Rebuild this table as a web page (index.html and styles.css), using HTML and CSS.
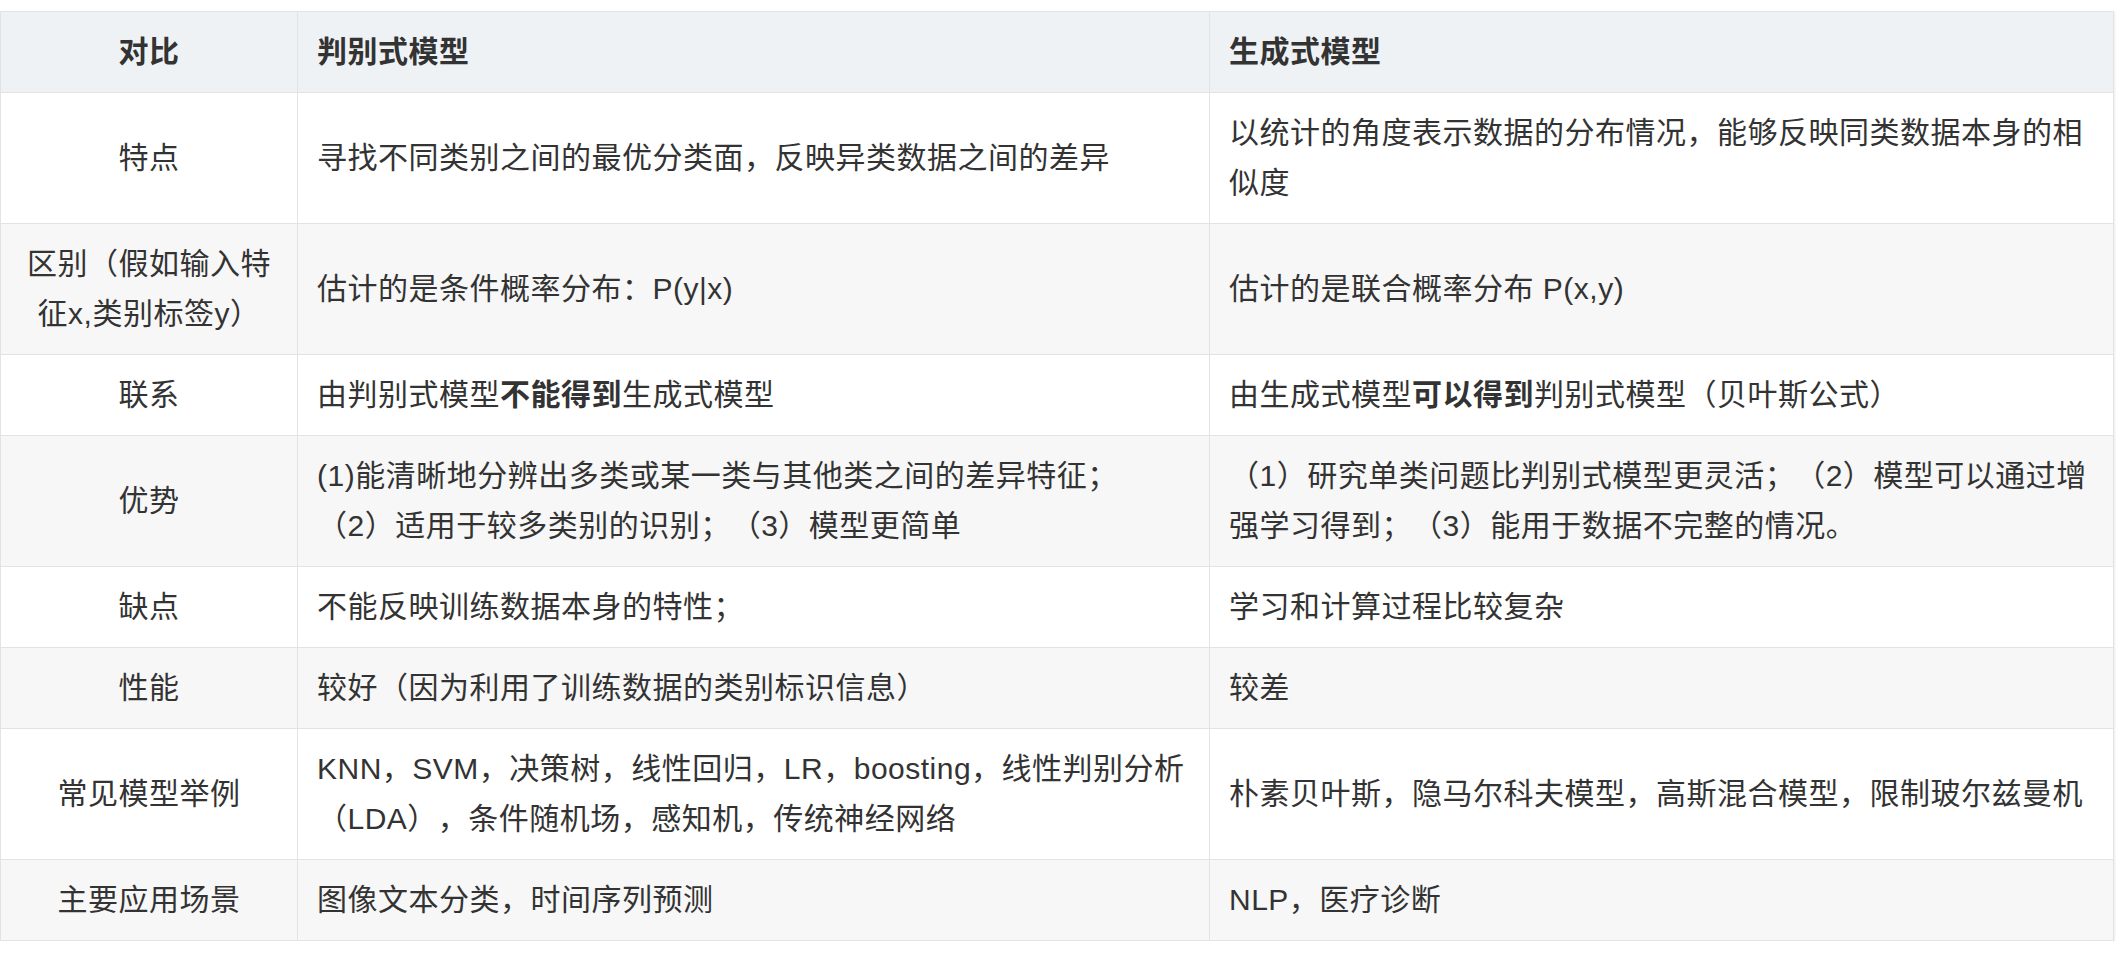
FILE: index.html
```html
<!DOCTYPE html>
<html lang="zh-CN">
<head>
<meta charset="utf-8">
<title>判别式模型与生成式模型对比</title>
<link rel="stylesheet" href="styles.css">
</head>
<body>
<table class="cmp">
  <colgroup>
    <col class="c1">
    <col class="c2">
    <col class="c3">
  </colgroup>
  <thead>
    <tr>
      <th class="center">对比</th>
      <th>判别式模型</th>
      <th>生成式模型</th>
    </tr>
  </thead>
  <tbody>
    <tr>
      <td class="center">特点</td>
      <td>寻找不同类别之间的最优分类面，反映异类数据之间的差异</td>
      <td>以统计的角度表示数据的分布情况，能够反映同类数据本身的相似度</td>
    </tr>
    <tr>
      <td class="center">区别（假如输入特征x,类别标签y）</td>
      <td>估计的是条件概率分布：P(y|x)</td>
      <td>估计的是联合概率分布 P(x,y)</td>
    </tr>
    <tr>
      <td class="center">联系</td>
      <td>由判别式模型<strong>不能得到</strong>生成式模型</td>
      <td>由生成式模型<strong>可以得到</strong>判别式模型（贝叶斯公式）</td>
    </tr>
    <tr>
      <td class="center">优势</td>
      <td>(1)能清晰地分辨出多类或某一类与其他类之间的差异特征；<br>（2）适用于较多类别的识别；（3）模型更简单</td>
      <td>（1）研究单类问题比判别式模型更灵活；（2）模型可以通过增强学习得到；（3）能用于数据不完整的情况。</td>
    </tr>
    <tr>
      <td class="center">缺点</td>
      <td>不能反映训练数据本身的特性；</td>
      <td>学习和计算过程比较复杂</td>
    </tr>
    <tr>
      <td class="center">性能</td>
      <td>较好（因为利用了训练数据的类别标识信息）</td>
      <td>较差</td>
    </tr>
    <tr>
      <td class="center">常见模型举例</td>
      <td>KNN，SVM，决策树，线性回归，LR，boosting，线性判别分析（LDA），条件随机场，感知机，传统神经网络</td>
      <td>朴素贝叶斯，隐马尔科夫模型，高斯混合模型，限制玻尔兹曼机</td>
    </tr>
    <tr>
      <td class="center">主要应用场景</td>
      <td>图像文本分类，时间序列预测</td>
      <td>NLP，医疗诊断</td>
    </tr>
  </tbody>
</table>
</body>
</html>
```

FILE: styles.css
```css
html, body {
  margin: 0;
  padding: 0;
  background: #ffffff;
}

body {
  padding-top: 11px;
  font-family: "Liberation Sans", "Noto Sans CJK SC", sans-serif;
  color: #333333;
}

.cmp {
  width: 2113px;
  table-layout: fixed;
  border-collapse: collapse;
  font-size: 30px;
  line-height: 50px;
  letter-spacing: 0.5px;
  text-spacing-trim: space-all;
  box-shadow: 1px 1px 2px rgba(0, 0, 0, 0.08);
}

.c1 { width: 297px; }
.c2 { width: 912px; }
.c3 { width: 904px; }

.cmp th,
.cmp td {
  border: 1px solid #e1e3e6;
  padding: 15px 19px;
  text-align: left;
  vertical-align: middle;
  word-break: break-all;
}

.cmp th {
  background: #eff2f5;
  font-weight: bold;
  color: #333333;
}

.cmp tbody tr:nth-child(even) td {
  background: #f7f7f7;
}

.cmp tbody tr:nth-child(odd) td {
  background: #ffffff;
}

.cmp .center {
  text-align: center;
}

.cmp strong {
  font-weight: bold;
}
```
